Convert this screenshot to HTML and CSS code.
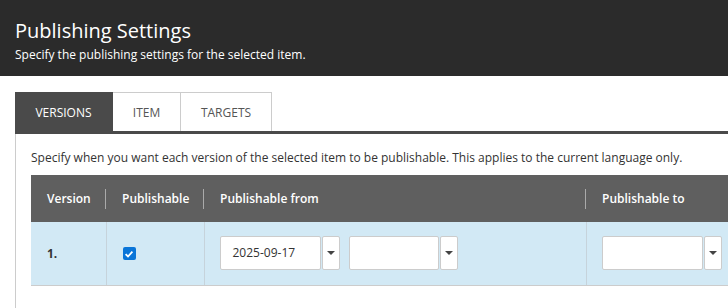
FILE: index.html
```html
<!DOCTYPE html>
<html lang="en">
<head>
    <meta charset="UTF-8">
    <title>Publishing Settings</title>
    <link rel="stylesheet" href="styles.css">
</head>
<body>
    <div class="header">
        <h1>Publishing Settings</h1>
        <p>Specify the publishing settings for the selected item.</p>
    </div>

    <div class="tabs">
        <div class="tab active tab-versions">Versions</div>
        <div class="tab tab-item">Item</div>
        <div class="tab tab-targets">Targets</div>
    </div>

    <div class="panel">
        <p class="intro">Specify when you want each version of the selected item to be publishable. This applies to the current language only.</p>

        <table class="versions">
            <colgroup>
                <col class="col-version">
                <col class="col-publishable">
                <col class="col-from">
                <col class="col-to">
            </colgroup>
            <thead>
                <tr>
                    <th><span>Version</span></th>
                    <th><span>Publishable</span></th>
                    <th><span>Publishable from</span></th>
                    <th class="last"><span>Publishable to</span></th>
                </tr>
            </thead>
            <tbody>
                <tr>
                    <td class="num">1.</td>
                    <td><span class="check"><svg width="12" height="12" viewBox="0 0 12 12"><path d="M2.6 6.2 L5 8.5 L9.4 3.6" fill="none" stroke="#fff" stroke-width="1.8"/></svg></span></td>
                    <td>
                        <div class="pickers">
                            <div class="picker date"><span class="field">2025-09-17</span><span class="drop"></span></div>
                            <div class="picker time"><span class="field"></span><span class="drop"></span></div>
                        </div>
                    </td>
                    <td>
                        <div class="pickers">
                            <div class="picker date"><span class="field"></span><span class="drop"></span></div>
                        </div>
                    </td>
                </tr>
            </tbody>
        </table>
    </div>
</body>
</html>
```

FILE: styles.css
```css
* {
    margin: 0;
    padding: 0;
    box-sizing: border-box;
}

body {
    font-family: 'Open Sans', 'Liberation Sans', sans-serif;
    background: #fff;
    width: 728px;
    overflow: hidden;
}

/* Dialog header */
.header {
    background: #2b2b2b;
    color: #fff;
    height: 76px;
    padding: 17px 15px 0;
}

.header h1 {
    font-size: 20px;
    font-weight: 400;
    line-height: 28px;
}

.header p {
    font-size: 12px;
    line-height: 18px;
    margin-top: 1px;
}

/* Tabs */
.tabs {
    display: flex;
    margin: 16px 0 0 15px;
    border-bottom: 3px solid #4a4a4a;
}

.tab {
    height: 39px;
    display: flex;
    align-items: center;
    justify-content: center;
    font-size: 12px;
    text-transform: uppercase;
    color: #555;
    border-top: 1px solid #ccc;
    border-right: 1px solid #ccc;
}

.tab.active {
    background: #4a4a4a;
    color: #fff;
    border-color: #4a4a4a;
}

.tab-versions { width: 98px; }
.tab-item { width: 68px; }
.tab-targets { width: 91px; }

/* Panel */
.panel {
    margin-left: 15px;
    border-left: 1px solid #ccc;
    padding: 15px 0 24px 15px;
}

.intro {
    font-size: 12px;
    line-height: 18px;
    color: #333;
    margin-bottom: 8px;
    white-space: nowrap;
}

.versions {
    border-collapse: collapse;
    table-layout: fixed;
    width: 900px;
    font-size: 12px;
}

.col-version { width: 75px; }
.col-publishable { width: 98px; }
.col-from { width: 382px; }
.col-to { width: 345px; }

.versions th {
    background: #5f5f5f;
    color: #fff;
    font-weight: 600;
    text-align: left;
    height: 47px;
    padding: 0;
}

.versions th span {
    display: block;
    padding-left: 16px;
    line-height: 20px;
    border-right: 1px solid #aaa;
}

.versions th.last span {
    border-right: none;
}

.versions td {
    background: #d2e9f5;
    height: 63px;
    padding: 0 0 0 15px;
    border-right: 1px solid #c6d3db;
    border-bottom: 1px solid #ccc;
    color: #333;
}

.versions td.num {
    font-weight: 700;
    padding-left: 16px;
}

.check {
    display: inline-flex;
    align-items: center;
    justify-content: center;
    width: 13px;
    height: 13px;
    border-radius: 2px;
    background: #0a75d8;
    margin: 4px 0 0 1px;
}

/* Date / time pickers */
.pickers {
    display: flex;
    gap: 9px;
}

.picker {
    display: flex;
    gap: 1px;
    height: 34px;
}

.picker .field {
    background: #fff;
    border: 1px solid #ccc;
    border-radius: 2px;
    font-size: 12px;
    color: #333;
    line-height: 32px;
    padding-left: 12px;
}

.picker.date .field { width: 101px; }
.picker.time .field { width: 90px; }

.picker .drop {
    width: 18px;
    background: #fff;
    border: 1px solid #ccc;
    border-radius: 2px;
    position: relative;
}

.picker .drop::after {
    content: "";
    position: absolute;
    left: 4px;
    top: 14px;
    border-left: 4px solid transparent;
    border-right: 4px solid transparent;
    border-top: 4px solid #444;
}
```
